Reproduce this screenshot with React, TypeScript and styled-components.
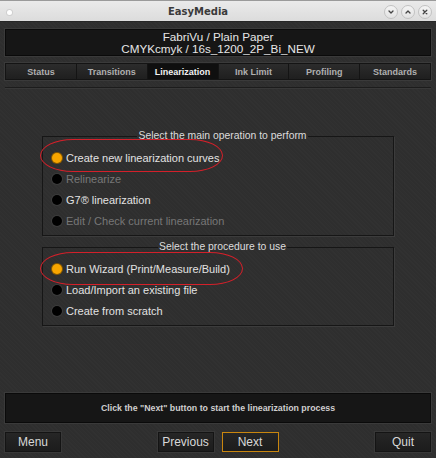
import React from "react";
import styled, { createGlobalStyle, css } from "styled-components";

const Global = createGlobalStyle`
  html, body { margin: 0; padding: 0; background: #2f2f2f; }
  #root { width: 436px; height: 458px; overflow: hidden; }
  * { box-sizing: border-box; }
`;

const Window = styled.div`
  width: 436px;
  height: 458px;
  display: flex;
  flex-direction: column;
  background-color: #2f2f2f;
  background-image: repeating-linear-gradient(45deg, rgba(255,255,255,0.012) 0 1px, rgba(0,0,0,0.03) 1px 2px, transparent 2px 3px);
  font-family: "Liberation Sans", Arial, sans-serif;
`;

const TitleBar = styled.div`
  height: 22px;
  flex: none;
  display: flex;
  align-items: center;
  position: relative;
  padding: 0 4px;
  background: linear-gradient(#eaeaea, #dcdcdc);
  border-top: 1px solid #9a9a9a;
  border-bottom: 1px solid #262626;
`;

const Dot = styled.div`
  width: 5px;
  height: 5px;
  border-radius: 50%;
  background: #ffffff;
  box-shadow: 0 0 0 1px #d0d0d0;
  margin: 2px 0 0 3px;
`;

const Title = styled.div`
  flex: 1;
  text-align: center;
  font-family: "DejaVu Sans", sans-serif;
  font-weight: bold;
  font-size: 10px;
  color: #3a3a3a;
  padding-top: 1px;
`;

const WinButtons = styled.div`
  display: flex;
  gap: 3px;
  margin-top: 2px;
`;

const WinButton = styled.div`
  width: 14px;
  height: 14px;
  border-radius: 50%;
  border: 1px solid #c2c2c2;
  background: linear-gradient(#f4f4f4, #e2e2e2);
  display: flex;
  align-items: center;
  justify-content: center;
`;

const Body = styled.div`
  flex: 1;
  display: flex;
  flex-direction: column;
  padding: 0 5px 6px;
  min-height: 0;
`;

const Header = styled.div`
  margin-top: 7px;
  height: 27px;
  background: #161616;
  border: 1px solid #0a0a0a;
  box-shadow: 0 0 0 1px #3a3a3a;
  color: #e6e6e6;
  font-size: 11.7px;
  line-height: 12px;
  text-align: center;
  padding-top: 1px;
`;

const Tabs = styled.div`
  margin-top: 7px;
  height: 17px;
  display: grid;
  grid-template-columns: repeat(6, 1fr);
  border: 1px solid #141414;
  box-shadow: 0 0 0 1px #3a3a3a;
  background: #141414;
  gap: 1px;
`;

const Tab = styled.div<{ $active?: boolean }>`
  display: flex;
  align-items: center;
  justify-content: center;
  font-size: 9px;
  font-weight: bold;
  color: #b0b0b0;
  background: linear-gradient(#2c2c2c, #1f1f1f);
  ${(p) =>
    p.$active &&
    css`
      background: #0f0f0f;
      color: #f2f2f2;
    `}
`;

const Panel = styled.div`
  flex: 1;
  margin-top: 7px;
  border-top: 1px solid #1c1c1c;
  box-shadow: inset 0 1px 0 #383838;
  padding: 42px 0 0 37px;
  display: flex;
  flex-direction: column;
  gap: 5px;
  position: relative;
`;

const Group = styled.fieldset`
  margin: 0;
  width: 352px;
  border: 1px solid #161616;
  box-shadow: 1px 1px 0 #3c3c3c;
  padding: 5px 0 4px 9px;
  min-width: 0;
`;

const Legend = styled.legend`
  margin: 0 auto;
  padding: 0 1px;
  font-size: 10.4px;
  line-height: 12px;
  color: #dcdcdc;
`;

const Row = styled.div<{ $disabled?: boolean }>`
  height: 21px;
  display: flex;
  align-items: center;
  gap: 4px;
  font-size: 11px;
  color: ${(p) => (p.$disabled ? "#777777" : "#e2e2e2")};
`;

const Radio = styled.span<{ $on?: boolean }>`
  width: 10px;
  height: 10px;
  border-radius: 50%;
  flex: none;
  background: ${(p) => (p.$on ? "#f7a500" : "#000")};
  box-shadow: 0 0 0 1px ${(p) => (p.$on ? "#8a5a00" : "#3c3c3c")};
`;

const Mark = styled.div<{ $top: number; $left: number; $w: number; $h: number }>`
  position: absolute;
  top: ${(p) => p.$top}px;
  left: ${(p) => p.$left}px;
  width: ${(p) => p.$w}px;
  height: ${(p) => p.$h}px;
  border: 1.5px solid #d4202a;
  border-radius: 34px / 17px;
  pointer-events: none;
`;

const Status = styled.div`
  height: 30px;
  flex: none;
  background: #161616;
  border: 1px solid #0a0a0a;
  box-shadow: 0 0 0 1px #3a3a3a;
  display: flex;
  align-items: center;
  justify-content: center;
  font-size: 8.8px;
  font-weight: bold;
  color: #cfcfcf;
`;

const Buttons = styled.div`
  margin-top: 9px;
  height: 20px;
  flex: none;
  display: flex;
  align-items: stretch;
`;

const Button = styled.div<{ $primary?: boolean; $w?: number }>`
  width: ${(p) => p.$w ?? 56}px;
  display: flex;
  align-items: center;
  justify-content: center;
  font-size: 12px;
  color: #d8d8d8;
  background: linear-gradient(#262626, #1c1c1c);
  border: 1px solid ${(p) => (p.$primary ? "#c9860e" : "#141414")};
  box-shadow: ${(p) => (p.$primary ? "none" : "0 0 0 1px #383838")};
`;

const Spacer = styled.div<{ $w?: number }>`
  ${(p) => (p.$w ? `width: ${p.$w}px;` : "flex: 1;")}
`;

const Icon = ({ d }: { d: string }) => (
  <svg width="8" height="8" viewBox="0 0 8 8">
    <path d={d} stroke="#444" strokeWidth="1.3" fill="none" strokeLinecap="round" strokeLinejoin="round" />
  </svg>
);

export default function App() {
  return (
    <>
      <Global />
      <Window>
        <TitleBar>
          <Dot />
          <Title>EasyMedia</Title>
          <WinButtons>
            <WinButton>
              <Icon d="M2 3 L4 5 L6 3" />
            </WinButton>
            <WinButton>
              <Icon d="M2 5 L4 3 L6 5" />
            </WinButton>
            <WinButton>
              <Icon d="M2.2 2.2 L5.8 5.8 M5.8 2.2 L2.2 5.8" />
            </WinButton>
          </WinButtons>
        </TitleBar>
        <Body>
          <Header>
            FabriVu / Plain Paper
            <br />
            CMYKcmyk / 16s_1200_2P_Bi_NEW
          </Header>
          <Tabs>
            <Tab>Status</Tab>
            <Tab>Transitions</Tab>
            <Tab $active>Linearization</Tab>
            <Tab>Ink Limit</Tab>
            <Tab>Profiling</Tab>
            <Tab>Standards</Tab>
          </Tabs>
          <Panel>
            <Group>
              <Legend>Select the main operation to perform</Legend>
              <Row>
                <Radio $on />
                Create new linearization curves
              </Row>
              <Row $disabled>
                <Radio />
                Relinearize
              </Row>
              <Row>
                <Radio />
                G7® linearization
              </Row>
              <Row $disabled>
                <Radio />
                Edit / Check current linearization
              </Row>
            </Group>
            <Group>
              <Legend>Select the procedure to use</Legend>
              <Row>
                <Radio $on />
                Run Wizard (Print/Measure/Build)
              </Row>
              <Row>
                <Radio />
                Load/Import an existing file
              </Row>
              <Row>
                <Radio />
                Create from scratch
              </Row>
            </Group>
            <Mark $top={51} $left={35} $w={183} $h={33} />
            <Mark $top={164} $left={35} $w={203} $h={33} />
          </Panel>
          <Status>Click the "Next" button to start the linearization process</Status>
          <Buttons>
            <Button>Menu</Button>
            <Spacer />
            <Button>Previous</Button>
            <Spacer $w={8} />
            <Button $primary $w={57}>Next</Button>
            <Spacer />
            <Button>Quit</Button>
          </Buttons>
        </Body>
      </Window>
    </>
  );
}
